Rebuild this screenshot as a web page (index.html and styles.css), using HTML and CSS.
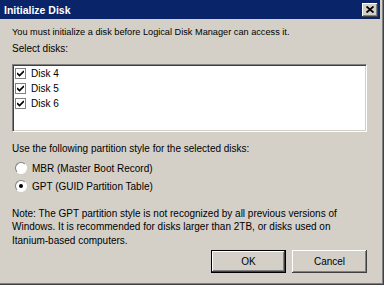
FILE: index.html
```html
<!DOCTYPE html>
<html lang="en">
<head>
    <meta charset="UTF-8">
    <title>Initialize Disk</title>
    <link rel="stylesheet" href="styles.css">
</head>
<body>

<div class="window">
    <div class="titlebar">
        <span class="title">Initialize Disk</span>
        <button class="close-btn">
            <svg width="8" height="7" viewBox="0 0 8 7">
                <path d="M0.5 0.5 L7.5 6.5 M7.5 0.5 L0.5 6.5" stroke="#000" stroke-width="1.8"/>
            </svg>
        </button>
    </div>

    <div class="content">
        <p class="intro">You must initialize a disk before Logical Disk Manager can access it.</p>
        <p class="label">Select disks:</p>

        <!-- disk list -->
        <div class="listbox">
            <div class="list-item"><span class="check"><svg width="7" height="7" viewBox="0 0 7 7"><path d="M0 3 L2.5 5.5 L7 1" fill="none" stroke="#000" stroke-width="1.6"/></svg></span>Disk 4</div>
            <div class="list-item"><span class="check"><svg width="7" height="7" viewBox="0 0 7 7"><path d="M0 3 L2.5 5.5 L7 1" fill="none" stroke="#000" stroke-width="1.6"/></svg></span>Disk 5</div>
            <div class="list-item"><span class="check"><svg width="7" height="7" viewBox="0 0 7 7"><path d="M0 3 L2.5 5.5 L7 1" fill="none" stroke="#000" stroke-width="1.6"/></svg></span>Disk 6</div>
        </div>

        <p class="label style-label">Use the following partition style for the selected disks:</p>
        <div class="radio-group">
            <div class="radio-row"><span class="radio"></span>MBR (Master Boot Record)</div>
            <div class="radio-row"><span class="radio selected"></span>GPT (GUID Partition Table)</div>
        </div>

        <p class="note">Note: The GPT partition style is not recognized by all previous versions of Windows. It is recommended for disks larger than 2TB, or disks used on Itanium-based computers.</p>

        <div class="buttons">
            <button class="btn default">OK</button>
            <button class="btn">Cancel</button>
        </div>
    </div>
</div>

</body>
</html>
```

FILE: styles.css
```css
body {
    margin: 0;
    font-family: "Liberation Sans", Arial, sans-serif;
    font-size: 10px;
    color: #000;
}
p {
    margin: 0;
}
.window {
    width: 384px;
    height: 285px;
    box-sizing: border-box;
    background-color: #d4d0c8;
    border-right: 1px solid #404040;
    border-bottom: 1px solid #404040;
    box-shadow: inset -1px -1px 0 #808080;
    display: flex;
    flex-direction: column;
}
.titlebar {
    height: 19px;
    margin-right: 3px;
    background-color: #0a246a;
    display: flex;
    align-items: center;
    justify-content: space-between;
    padding: 0 2px 0 4px;
}
.title {
    color: #fff;
    font-weight: bold;
    font-size: 10.5px;
}
.close-btn {
    width: 16px;
    height: 14px;
    padding: 0;
    background-color: #d4d0c8;
    border: none;
    box-shadow: inset -1px -1px 0 #404040, inset 1px 1px 0 #fff, inset -2px -2px 0 #808080;
    display: flex;
    align-items: center;
    justify-content: center;
}
.content {
    padding: 0 16px 0 12px;
    line-height: 13px;
}
.intro {
    margin-top: 7px;
    font-size: 9.2px;
}
.label {
    margin-top: 3px;
}
.listbox {
    margin-top: 9px;
    height: 68px;
    box-sizing: border-box;
    background-color: #fff;
    border: 1px solid;
    border-color: #808080 #fff #fff #808080;
    box-shadow: inset 1px 1px 0 #404040, inset -1px -1px 0 #d4d0c8;
    padding: 1px 0 0 2px;
}
.list-item {
    height: 15px;
    display: flex;
    align-items: center;
}
.check {
    width: 11px;
    height: 11px;
    box-sizing: border-box;
    border: 1px solid #808080;
    background-color: #fff;
    margin-right: 5px;
    display: flex;
    align-items: center;
    justify-content: center;
}
.style-label {
    margin-top: 9.5px;
}
.radio-group {
    margin-top: 4.5px;
}
.radio-row {
    height: 18px;
    display: flex;
    align-items: center;
    padding-left: 3px;
}
.radio {
    width: 12px;
    height: 12px;
    box-sizing: border-box;
    border-radius: 50%;
    border: 1px solid;
    border-color: #808080 #fff #fff #808080;
    background-color: #fff;
    margin-right: 5px;
    position: relative;
}
.radio.selected::after {
    content: "";
    position: absolute;
    left: 3px;
    top: 3px;
    width: 4px;
    height: 4px;
    border-radius: 50%;
    background-color: #000;
}
.note {
    margin-top: 11.5px;
    width: 330px;
    line-height: 13.5px;
}
.buttons {
    display: flex;
    justify-content: flex-end;
    gap: 6px;
    margin-top: 3px;
}
.btn {
    width: 75px;
    height: 23px;
    font-family: "Liberation Sans", Arial, sans-serif;
    font-size: 10px;
    background-color: #d4d0c8;
    border: none;
    box-shadow: inset -1px -1px 0 #404040, inset 1px 1px 0 #fff, inset -2px -2px 0 #808080;
}
.btn.default {
    border: 1px solid #000;
}
```
